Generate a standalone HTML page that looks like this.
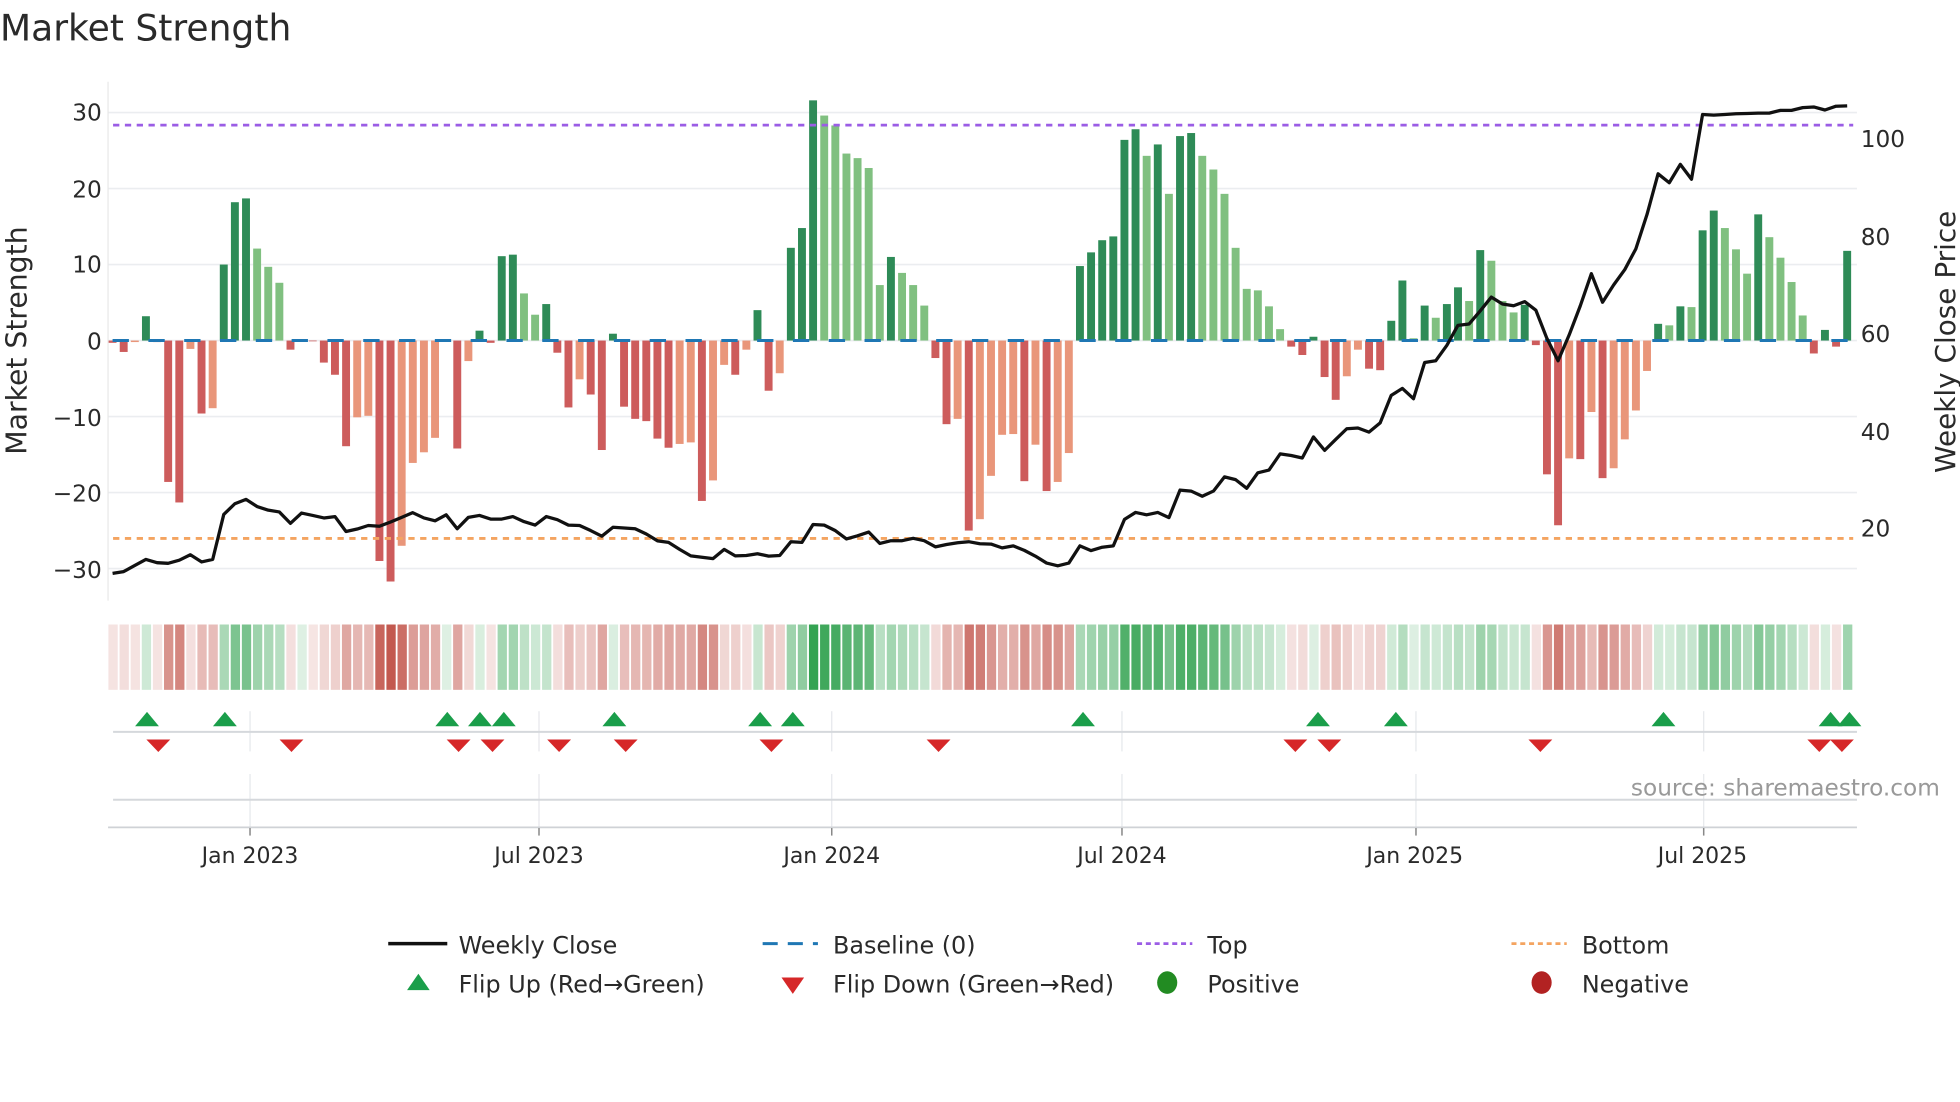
<!DOCTYPE html>
<html><head><meta charset="utf-8">
<style>
html,body{margin:0;padding:0;background:#fff;}
svg{display:block;}
text{font-family:"DejaVu Sans","Liberation Sans",sans-serif;fill:#2a2a2a;}
</style></head>
<body>
<svg id="c" width="1960" height="1102" viewBox="0 0 1560 877" xmlns="http://www.w3.org/2000/svg">
<rect width="1560" height="877" fill="#fff"/>
<text x="0" y="32" font-size="28.7">Market Strength</text>
<g id="grid" stroke="#ebedf0" stroke-width="1.3"></g>
<line x1="86" y1="65" x2="86" y2="478" stroke="#e8e8e8" stroke-width="1"/>
<g id="bars"></g>
<line x1="89.6" y1="271" x2="1478" y2="271" stroke="#1f77b4" stroke-width="2.4" stroke-dasharray="13 15.5"/>
<line x1="90" y1="99.5" x2="1475" y2="99.5" stroke="#9b5de5" stroke-width="2.2" stroke-dasharray="5 4.4"/>
<line x1="90" y1="428.5" x2="1475" y2="428.5" stroke="#f4a460" stroke-width="2.2" stroke-dasharray="5 4.4"/>
<polyline id="price" fill="none" stroke="#111" stroke-width="2.6" stroke-linejoin="round"/>
<g font-size="18.5" text-anchor="end">
<text x="81" y="96">30</text><text x="81" y="157">20</text><text x="81" y="217">10</text>
<text x="81" y="278">0</text><text x="81" y="339">−10</text><text x="81" y="399">−20</text><text x="81" y="460">−30</text>
</g>
<g font-size="18.5">
<text x="1481" y="117">100</text><text x="1481" y="195">80</text><text x="1481" y="272">60</text>
<text x="1481" y="350">40</text><text x="1481" y="427">20</text>
</g>
<text transform="translate(21,271) rotate(-90)" font-size="22.5" text-anchor="middle">Market Strength</text>
<text transform="translate(1556,272) rotate(-90)" font-size="22.2" text-anchor="middle">Weekly Close Price</text>
<g id="strip"></g>
<g stroke="#e6e8ec" stroke-width="1">
<line x1="199" y1="566" x2="199" y2="598"/><line x1="429" y1="566" x2="429" y2="598"/><line x1="662" y1="566" x2="662" y2="598"/>
<line x1="893" y1="566" x2="893" y2="598"/><line x1="1127" y1="566" x2="1127" y2="598"/><line x1="1356" y1="566" x2="1356" y2="598"/>
<line x1="199" y1="616" x2="199" y2="658"/><line x1="429" y1="616" x2="429" y2="658"/><line x1="662" y1="616" x2="662" y2="658"/>
<line x1="893" y1="616" x2="893" y2="658"/><line x1="1127" y1="616" x2="1127" y2="658"/><line x1="1356" y1="616" x2="1356" y2="658"/>
</g>
<line x1="90" y1="582.5" x2="1478" y2="582.5" stroke="#d5d8dc" stroke-width="1.6"/>
<line x1="90" y1="636.5" x2="1478" y2="636.5" stroke="#d5d8dc" stroke-width="1.6"/>
<line x1="86" y1="658.5" x2="1478" y2="658.5" stroke="#cfd2d6" stroke-width="1.4"/>
<g id="marks"></g>
<g stroke="#888" stroke-width="1.2">
<line x1="199" y1="659" x2="199" y2="665"/><line x1="429" y1="659" x2="429" y2="665"/><line x1="662" y1="659" x2="662" y2="665"/>
<line x1="893" y1="659" x2="893" y2="665"/><line x1="1127" y1="659" x2="1127" y2="665"/><line x1="1356" y1="659" x2="1356" y2="665"/>
</g>
<text x="1544" y="633" font-size="18.5" text-anchor="end" style="fill:#999">source: sharemaestro.com</text>
<g font-size="17.5" text-anchor="middle">
<text x="199" y="687">Jan 2023</text><text x="429" y="687">Jul 2023</text><text x="662" y="687">Jan 2024</text>
<text x="893" y="687">Jul 2024</text><text x="1126" y="687">Jan 2025</text><text x="1355" y="687">Jul 2025</text>
</g>
<g font-size="19">
<line x1="309" y1="751" x2="356" y2="751" stroke="#111" stroke-width="2.8"/>
<text x="365" y="759">Weekly Close</text>
<line x1="607" y1="751" x2="651" y2="751" stroke="#1f77b4" stroke-width="2.4" stroke-dasharray="12 8"/>
<text x="663" y="759">Baseline (0)</text>
<line x1="905" y1="751" x2="949" y2="751" stroke="#9b5de5" stroke-width="2.2" stroke-dasharray="4 3"/>
<text x="961" y="759">Top</text>
<line x1="1203" y1="751" x2="1247" y2="751" stroke="#f4a460" stroke-width="2.2" stroke-dasharray="4 3"/>
<text x="1259" y="759">Bottom</text>
<polygon points="324,788 333,775 342,788" fill="#1a9e4a"/>
<text x="365" y="790">Flip Up (Red→Green)</text>
<polygon points="622,778 640,778 631,791" fill="#d62728"/>
<text x="663" y="790">Flip Down (Green→Red)</text>
<ellipse cx="929" cy="782" rx="8" ry="9" fill="#228b22"/>
<text x="961" y="790">Positive</text>
<ellipse cx="1227" cy="782" rx="8" ry="9" fill="#b22222"/>
<text x="1259" y="790">Negative</text>
</g>
</svg>
<script>
(function(){
var NS="http://www.w3.org/2000/svg";
function el(t,a,p){var e=document.createElementNS(NS,t);for(var k in a)e.setAttribute(k,a[k]);p.appendChild(e);return e;}
var v=[-0.3,-1.5,-0.2,3.2,-0.2,-18.6,-21.3,-1.1,-9.6,-8.9,10,18.2,18.7,12.1,9.7,7.6,-1.2,0,-0.1,-2.9,-4.5,-13.9,-10.1,-9.9,-29,-31.7,-27,-16.1,-14.7,-12.8,0,-14.2,-2.7,1.3,-0.3,11.1,11.3,6.2,3.4,4.8,-1.6,-8.8,-5.1,-7.1,-14.4,0.9,-8.7,-10.3,-10.6,-12.9,-14.1,-13.6,-13.4,-21.1,-18.4,-3.2,-4.5,-1.2,4,-6.6,-4.3,
12.2,14.8,31.6,29.6,28.3,24.6,24,22.7,7.3,11,8.9,7.3,4.6,-2.3,-11,-10.3,-25,-23.5,-17.8,-12.4,-12.3,-18.5,-13.7,-19.8,-18.6,-14.8,9.8,11.6,13.2,13.7,26.4,27.8,24.3,25.8,19.3,26.9,27.3,24.3,22.5,19.3,12.2,6.8,6.6,4.5,1.5,-0.8,-1.9,0.5,
-4.8,-7.8,-4.7,-1.2,-3.7,-3.9,2.6,7.9,0.3,4.6,3,4.8,7,5.2,11.9,10.5,5.2,3.7,4.7,-0.6,-17.6,-24.3,-15.5,-15.6,-9.4,-18.1,-16.8,-13,-9.2,-4,2.2,2,4.5,4.4,14.5,17.1,14.8,12,8.8,16.6,13.6,10.9,7.7,3.3,-1.7,1.4,-0.8,11.8];
var py=[456.3,454.9,450.0,445.2,447.8,448.3,445.8,441.5,447.2,445.2,409.4,400.9,397.4,403.1,406.0,407.4,416.5,408.3,410.2,412.2,411.1,423.0,421.0,418.2,418.8,415.4,411.7,408.0,412.2,414.5,409.7,420.8,411.7,410.2,413.1,413.1,411.1,415.1,417.9,411.1,413.6,417.9,418.2,422.2,426.7,419.6,420.2,420.8,425.0,430.4,431.6,437.2,442.4,443.5,444.6,437.2,442.4,442.1,440.7,442.6,442.1,
431.1,431.6,417.4,417.9,422.3,428.9,426.4,423.4,432.5,430.3,430.3,428.4,430.3,435.2,433.3,431.9,431.1,432.7,433.0,436.0,434.4,438.0,442.6,448.1,450.3,448.1,434.4,438.2,435.5,434.4,413.3,407.8,409.7,407.8,411.9,390.0,390.8,394.9,390.8,379.5,381.7,388.6,376.3,374.1,361.2,362.5,364.5,347.7,358.4,
349.7,341.2,340.6,343.9,336.5,314.6,309.1,317.3,288.5,287.1,274.8,258.9,257.8,247.4,236.4,241.9,243.3,240.0,246.8,269.3,287.1,266.6,243.3,217.8,240.5,226.8,214.5,198.0,170.6,138.3,145.4,130.8,142.6,91.1,91.6,91.1,90.5,90.3,90.0,90.0,87.8,87.8,85.6,85.1,87.5,84.5,84.2];
var X0=89.6,DX=8.85,Z=271,U=6.05;
var grid=document.getElementById('grid');
[30,20,10,0,-10,-20,-30].forEach(function(t){var y=Z-t*U;el('line',{x1:86,y1:y,x2:1478,y2:y},grid);});
var bars=document.getElementById('bars');
for(var i=0;i<v.length;i++){
 var x=X0+DX*i, val=v[i], prev=i>0?v[i-1]:0, col;
 if(val>=0){col=(i==0||val>=prev)?'#2e8b57':'#80c080';}
 else{col=(i==0||val<=prev)?'#cd5c5c':'#e9967a';}
 var h=Math.abs(val)*U; if(h<0.5)continue;
 el('rect',{x:x-3.15,y:val>=0?Z-h:Z,width:6.3,height:h,fill:col},bars);
}
var pts=[];for(var i=0;i<py.length;i++)pts.push((X0+DX*i).toFixed(1)+','+py[i]);
document.getElementById('price').setAttribute('points',pts.join(' '));
var strip=document.getElementById('strip');
for(var i=0;i<v.length;i++){
 var val=v[i],a=Math.min(1,0.16+0.84*Math.abs(val)/31.7);
 var c=val>=0?'rgba(52,163,82,'+a.toFixed(2)+')':'rgba(192,80,70,'+(a*0.95).toFixed(2)+')';
 el('rect',{x:86.3+DX*i,y:497,width:7.4,height:52,fill:c},strip);
}
var marks=document.getElementById('marks');
[117,179,356,382,401,489,605,631,862,1049,1111,1324,1457,1472].forEach(function(x){el('polygon',{points:(x-9.5)+',578 '+x+',566.5 '+(x+9.5)+',578',fill:'#1a9e4a'},marks);});
[126,232,365,392,445,498,614,747,1031,1058,1226,1448,1466].forEach(function(x){el('polygon',{points:(x-9.5)+',588.5 '+(x+9.5)+',588.5 '+x+',598.5',fill:'#d62728'},marks);});
})();
</script>
</body></html>
